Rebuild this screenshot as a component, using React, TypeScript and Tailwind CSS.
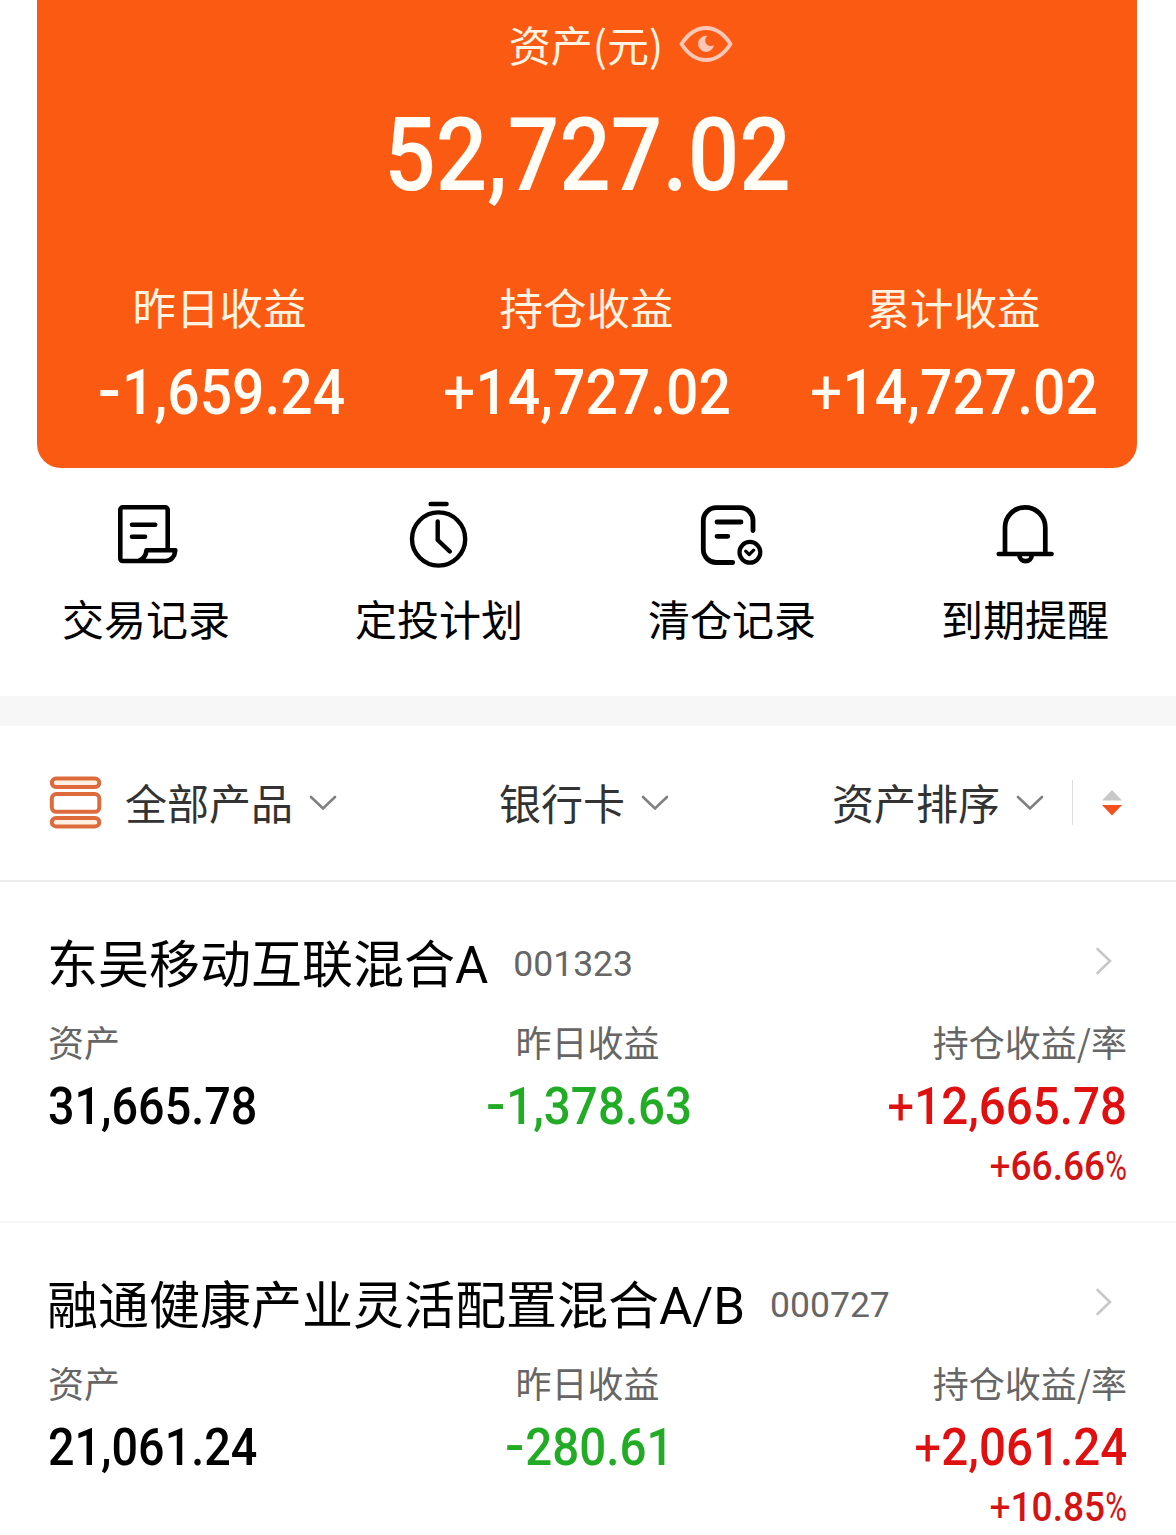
import React from 'react';
import clsx from 'clsx';

interface Fund {
  name: string;
  code: string;
  asset: string;
  yesterday: string;
  holding: string;
  rate: string;
}

const funds: Fund[] = [
  {
    name: '东吴移动互联混合A',
    code: '001323',
    asset: '31,665.78',
    yesterday: '-1,378.63',
    holding: '+12,665.78',
    rate: '+66.66%',
  },
  {
    name: '融通健康产业灵活配置混合A/B',
    code: '000727',
    asset: '21,061.24',
    yesterday: '-280.61',
    holding: '+2,061.24',
    rate: '+10.85%',
  },
];

const summary = [
  { label: '昨日收益', value: '-1,659.24' },
  { label: '持仓收益', value: '+14,727.02' },
  { label: '累计收益', value: '+14,727.02' },
];

// Condensed figures used for every amount
const Amount: React.FC<{ value: string; className?: string }> = ({ value, className }) => {
  const sign = /^[+-]/.test(value) ? value[0] : '';
  const percent = value.endsWith('%');
  const digits = value.slice(sign.length, percent ? -1 : undefined);

  return (
    <span
      className={clsx(
        "inline-block whitespace-nowrap font-['Roboto',sans-serif] font-medium",
        sign ? 'scale-x-[0.905]' : 'scale-x-[0.89]',
        className
      )}
    >
      {sign === '+' && <span className="font-normal">+</span>}
      {sign === '-' && <span className="mr-[0.06em] ml-[0.09em] inline-block -translate-y-[0.03em] scale-x-[1.2]">-</span>}
      {digits}
      {percent && <span className="-mr-[0.14em] inline-block origin-left scale-x-[0.8] font-normal">%</span>}
    </span>
  );
};

const EyeIcon = () => (
  <svg className="-ml-px h-[38px] w-[54px]" viewBox="0 0 54 38" fill="none">
    <path
      d="M2.500 19C9 9 17 3 27 3S45 9 51.500 19C45 29 37 35 27 35S9 29 2.500 19Z"
      stroke="#ffc5b6"
      strokeWidth="4"
      strokeLinejoin="round"
    />
    <path d="M28.500 11A8 8 0 1 0 35 20A5.500 5.500 0 0 1 28.500 11Z" fill="#ffc5b6" />
  </svg>
);

const RecordIcon = () => (
  <svg className="size-[72px]" viewBox="0 0 72 72" fill="none" stroke="#000" strokeWidth="4.600" strokeLinecap="round" strokeLinejoin="round">
    <path d="M57.700 51V10.800A2.500 2.500 0 0 0 55.200 8.300H12.800A2.500 2.500 0 0 0 10.300 10.800V59.500A2.500 2.500 0 0 0 12.800 62H55.500C61 62 64.800 57.500 65.300 51.300H36.500C36 56 33.500 60 29.500 61.500" />
    <path d="M22 25.700H45.200M22 37.700H35" />
  </svg>
);

const PlanIcon = () => (
  <svg className="size-[72px]" viewBox="0 0 72 72" fill="none" stroke="#000" strokeWidth="4.400" strokeLinecap="round" strokeLinejoin="round">
    <circle cx="35.600" cy="40" r="26.600" />
    <path d="M27.600 5H43.600M34.700 22.500V41L46.800 52.500" />
  </svg>
);

const ClearedIcon = () => (
  <svg className="size-[72px]" viewBox="0 0 72 72" fill="none" stroke="#000" strokeWidth="4.800" strokeLinecap="round" strokeLinejoin="round">
    <path d="M57 31.500V21.700A13 13 0 0 0 44 8.700H20.300A13 13 0 0 0 7.300 21.700V50.500A13 13 0 0 0 20.300 63.500H36.700M21 23H45M21 37.300H31.800" />
    <circle cx="53.900" cy="53.300" r="10.400" strokeWidth="4.200" />
    <path d="M49.700 52.200L53.200 55.500L57.700 51.200" strokeWidth="3.200" />
  </svg>
);

const BellIcon = () => (
  <svg className="size-[72px]" viewBox="0 0 72 72" fill="none" stroke="#000" strokeWidth="4.700" strokeLinecap="round" strokeLinejoin="round">
    <path d="M16 54V28.500A20.150 20.150 0 0 1 56.300 28.500V54" />
    <path d="M9.800 55H62.500M30.400 56A6.200 6.200 0 0 0 42.800 56" />
  </svg>
);

const ProductsIcon = () => (
  <svg className="size-[54px]" viewBox="0 0 54 54" fill="#fff0e4" stroke="#dd6b3c" strokeWidth="4">
    <rect x="2.800" y="2.600" width="47.500" height="8.400" rx="4.200" />
    <rect x="2.800" y="18" width="47.500" height="17.800" rx="4.500" fill="#fff" />
    <rect x="2.800" y="42" width="47.500" height="8.400" rx="4.200" />
  </svg>
);

const DownIcon = () => (
  <svg className="-mt-px -ml-px h-[16px] w-[28px]" viewBox="0 0 28 16" fill="none">
    <path d="M2 2L14 13.500L26 2" stroke="#808080" strokeWidth="2.600" strokeLinecap="round" />
  </svg>
);

const SortIcon = () => (
  <svg className="-mt-px h-[26px] w-[22px]" viewBox="0 0 22 26">
    <path d="M11 0L21 10.500H1Z" fill="#c8c8c8" />
    <path d="M1 15H21L11 25.500Z" fill="#f4511e" />
  </svg>
);

const RightIcon = () => (
  <svg className="h-[28px] w-[18px]" viewBox="0 0 18 28" fill="none">
    <path d="M2.500 2L15 14L2.500 26" stroke="#c8c8c8" strokeWidth="2.600" strokeLinecap="round" />
  </svg>
);

const actions = [
  { label: '交易记录', icon: <RecordIcon /> },
  { label: '定投计划', icon: <PlanIcon /> },
  { label: '清仓记录', icon: <ClearedIcon /> },
  { label: '到期提醒', icon: <BellIcon /> },
];

const FundItem: React.FC<{ fund: Fund }> = ({ fund }) => (
  <div className="h-[341px] border-b-2 border-[#f7f7f7] pr-[49px] pl-12">
    <div className="flex h-[129px] items-center pt-[36px]">
      <h2 className="-ml-px pt-[3px] font-['Roboto','Noto_Sans_CJK_SC',sans-serif] text-[51px] leading-[60px] text-black">{fund.name}</h2>
      <span className="ml-[25px] font-['Roboto',sans-serif] text-[35.5px] text-[#666]">{fund.code}</span>
      <div className="mr-[14px] ml-auto -mt-[8px]">
        <RightIcon />
      </div>
    </div>
    <div className="grid grid-cols-3">
      <div>
        <div className="text-[36px] leading-[60px] text-[#666]">资产</div>
        <Amount value={fund.asset} className="origin-left text-[52.5px] leading-[70px] text-black" />
      </div>
      <div className="text-center">
        <div className="text-[36px] leading-[60px] text-[#666]">昨日收益</div>
        <Amount value={fund.yesterday} className="text-[52.5px] leading-[70px] text-[#22ac26]" />
      </div>
      <div className="flex flex-col items-end">
        <div className="text-[36px] leading-[60px] text-[#666]">持仓收益/率</div>
        <Amount value={fund.holding} className="origin-right text-[52.5px] leading-[70px] text-[#e01010]" />
        <Amount value={fund.rate} className="origin-right text-[41px] leading-[50px] text-[#d41414]" />
      </div>
    </div>
  </div>
);

export default function App() {
  return (
    <div className="h-[1535px] w-[1176px] overflow-hidden bg-white font-['Noto_Sans_CJK_SC',sans-serif]">
      <div className="mr-[39px] ml-[37px] h-[468px] rounded-b-[24px] bg-[#fb5a13] pt-[14px] text-[#fff3e2]">
        <div className="flex h-[60px] items-center justify-center gap-[17px] pl-[68px]">
          <span className="text-[42px] leading-[60px]">资产(元)</span>
          <EyeIcon />
        </div>
        <div className="mt-[31px] text-center">
          <Amount value="52,727.02" className="text-[102px] leading-[100px] text-[#fffdf5]" />
        </div>
        <div className="mt-[72px] -ml-px grid grid-cols-3 text-center">
          {summary.map((item) => (
            <div key={item.label}>
              <div className="text-[43.5px] leading-[60px]">{item.label}</div>
              <Amount value={item.value} className="mt-[26px] text-[63px] leading-[60px] text-[#fffdf5]" />
            </div>
          ))}
        </div>
      </div>

      <div className="mr-1 grid h-[228px] grid-cols-4 pt-[31px]">
        {actions.map((action) => (
          <div key={action.label} className="flex flex-col items-center">
            <div className="-ml-[2px]">{action.icon}</div>
            <span className="mt-[17px] -ml-px text-[42px] leading-[60px] text-black">{action.label}</span>
          </div>
        ))}
      </div>

      <div className="h-[30px] bg-[#f7f7f7]" />

      <div className="grid h-[156px] grid-cols-[450px_333px_240px_1fr] items-center border-b-2 border-[#ededed] pl-[49px] text-[42px] leading-[60px] text-[#333]">
        <div className="flex items-center">
          <ProductsIcon />
          <span className="mr-[17px] ml-[22px] -mt-[2px]">全部产品</span>
          <DownIcon />
        </div>
        <div className="flex items-center gap-[17px]">
          <span className="-mt-[2px]">银行卡</span>
          <DownIcon />
        </div>
        <div className="flex items-center gap-[17px]">
          <span className="-mt-[2px]">资产排序</span>
          <DownIcon />
        </div>
        <div className="flex items-center">
          <div className="-mt-[2px] h-[45px] w-px bg-[#ddd]" />
          <div className="ml-[28px]">
            <SortIcon />
          </div>
        </div>
      </div>

      {funds.map((fund) => (
        <FundItem key={fund.code} fund={fund} />
      ))}
    </div>
  );
}
